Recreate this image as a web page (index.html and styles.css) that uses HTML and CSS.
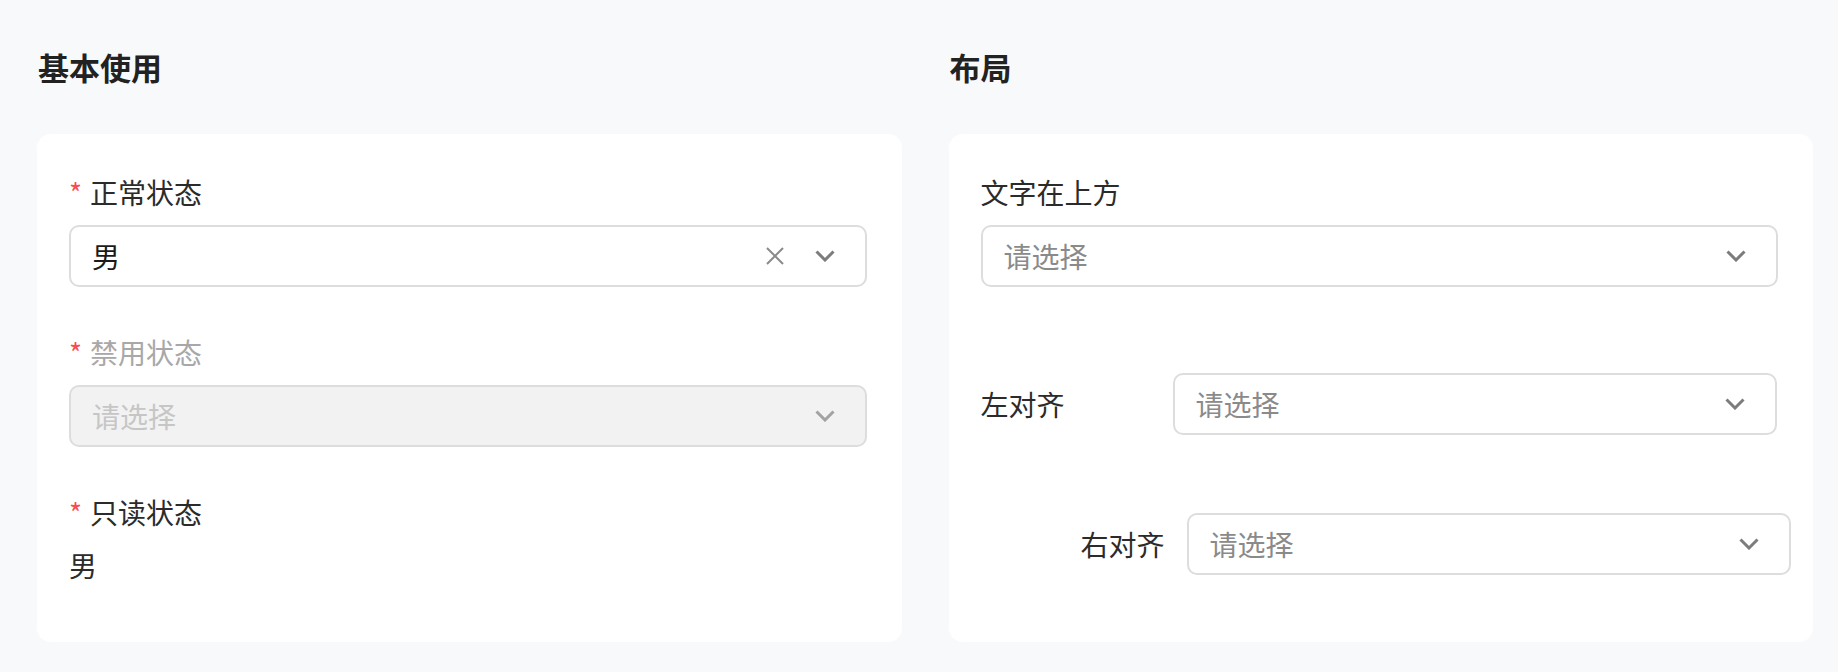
FILE: index.html
```html
<!DOCTYPE html>
<html lang="zh-CN">
<head>
<meta charset="utf-8">
<title>Select</title>
<link rel="stylesheet" href="styles.css">
</head>
<body>
<div class="page">
  <section class="demo">
    <h2 class="demo-title">基本使用</h2>
    <div class="card">
      <div class="item">
        <div class="label"><span class="star">*</span>正常状态</div>
        <div class="select">
          <span class="value">男</span>
          <svg class="icon-clear" viewBox="0 0 18 18" width="18" height="18"><path d="M1 1 L17 17 M17 1 L1 17" fill="none" stroke="currentColor" stroke-width="2"/></svg>
          <svg class="icon-arrow" viewBox="0 0 20 12" width="20" height="12"><path d="M1.5 1.5 L10 10 L18.5 1.5" fill="none" stroke="currentColor" stroke-width="3"/></svg>
        </div>
      </div>
      <div class="item">
        <div class="label label-disabled"><span class="star">*</span>禁用状态</div>
        <div class="select select-disabled">
          <span class="placeholder">请选择</span>
          <svg class="icon-arrow" viewBox="0 0 20 12" width="20" height="12"><path d="M1.5 1.5 L10 10 L18.5 1.5" fill="none" stroke="currentColor" stroke-width="3"/></svg>
        </div>
      </div>
      <div class="item item-last">
        <div class="label"><span class="star">*</span>只读状态</div>
        <div class="readonly">男</div>
      </div>
    </div>
  </section>
  <section class="demo">
    <h2 class="demo-title">布局</h2>
    <div class="card">
      <div class="item">
        <div class="label">文字在上方</div>
        <div class="select">
          <span class="placeholder">请选择</span>
          <svg class="icon-arrow" viewBox="0 0 20 12" width="20" height="12"><path d="M1.5 1.5 L10 10 L18.5 1.5" fill="none" stroke="currentColor" stroke-width="3"/></svg>
        </div>
      </div>
      <div class="item item-row item-left">
        <div class="row-label">左对齐</div>
        <div class="select select-flex">
          <span class="placeholder">请选择</span>
          <svg class="icon-arrow" viewBox="0 0 20 12" width="20" height="12"><path d="M1.5 1.5 L10 10 L18.5 1.5" fill="none" stroke="currentColor" stroke-width="3"/></svg>
        </div>
      </div>
      <div class="item item-row item-right">
        <div class="row-label row-label-right">右对齐</div>
        <div class="select select-flex">
          <span class="placeholder">请选择</span>
          <svg class="icon-arrow" viewBox="0 0 20 12" width="20" height="12"><path d="M1.5 1.5 L10 10 L18.5 1.5" fill="none" stroke="currentColor" stroke-width="3"/></svg>
        </div>
      </div>
    </div>
  </section>
</div>
</body>
</html>
```
FILE: styles.css
```css
* { box-sizing: border-box; }
html, body {
  margin: 0;
  padding: 0;
  background: #f8f9fb;
}
body {
  font-family: "Noto Sans CJK SC", "Noto Sans", sans-serif;
  color: #2b2b2b;
}
.page {
  display: grid;
  grid-template-columns: minmax(0, 1fr) minmax(0, 1fr);
  column-gap: 47px;
  padding: 47px 25px 0 37px;
}
.demo {
  display: flex;
  flex-direction: column;
  min-width: 0;
}
.demo-title {
  margin: 0 0 47px 1px;
  font-size: 31px;
  line-height: 40px;
  font-weight: 700;
  color: #222222;
}
.card {
  flex: 1;
  background: #ffffff;
  border-radius: 14px;
  padding: 38px 35px 57px 32px;
}
.item {
  margin-bottom: 45px;
}
.item-last {
  margin-bottom: 0;
}
.label {
  font-size: 28px;
  line-height: 40px;
  color: #2b2b2b;
  margin-bottom: 13px;
}
.label-disabled {
  color: #a8a8a8;
}
.star {
  color: #fa4b50;
  margin-right: 8px;
}
.select {
  display: flex;
  align-items: center;
  height: 62px;
  border: 2px solid #dddddd;
  border-radius: 10px;
  background: #ffffff;
  padding: 0 30px 0 21px;
  font-size: 28px;
}
.select-disabled {
  background: #f2f2f2;
}
.value {
  flex: 1;
  color: #1a1a1a;
}
.placeholder {
  flex: 1;
  color: #8a8a8a;
}
.select-disabled .placeholder {
  color: #c6c6c6;
}
.icon-clear {
  color: #8a8a8a;
  margin-right: 31px;
  display: block;
}
.icon-arrow {
  color: #7c7c7c;
  display: block;
}
.select-disabled .icon-arrow {
  color: #a2a2a2;
}
.readonly {
  font-size: 28px;
  line-height: 40px;
  color: #2b2b2b;
}
.item-row {
  display: flex;
  align-items: center;
  width: 796px;
}
.item-left {
  padding-top: 41px;
  margin-bottom: 78px;
}
.item-right {
  margin-left: 14px;
  margin-bottom: 0;
}
.row-label {
  width: 192px;
  flex: none;
  font-size: 28px;
  line-height: 40px;
  color: #2b2b2b;
}
.row-label-right {
  text-align: right;
  padding-right: 22px;
}
.select-flex {
  flex: 1;
}
```
